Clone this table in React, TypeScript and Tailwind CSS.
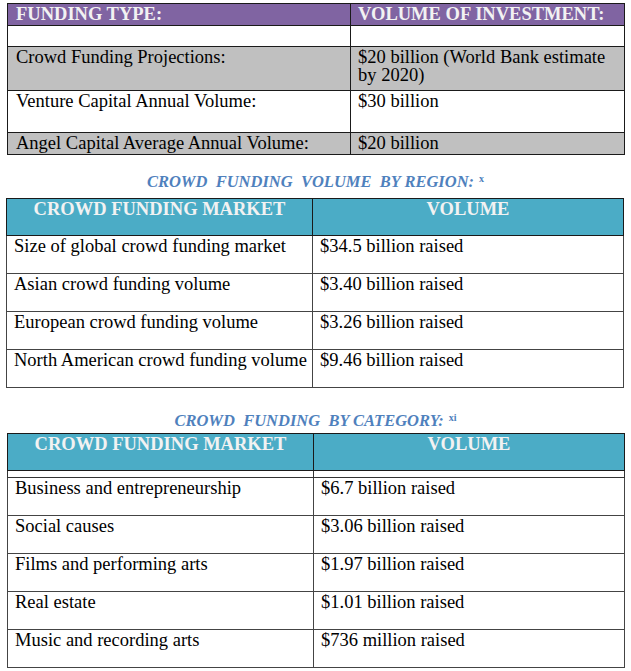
const regionRows = [
  ['Size of global crowd funding market', '$34.5 billion raised'],
  ['Asian crowd funding volume', '$3.40 billion raised'],
  ['European crowd funding volume', '$3.26 billion raised'],
  ['North American crowd funding volume', '$9.46 billion raised'],
];

const categoryRows = [
  ['Business and entrepreneurship', '$6.7 billion raised'],
  ['Social causes', '$3.06 billion raised'],
  ['Films and performing arts', '$1.97 billion raised'],
  ['Real estate', '$1.01 billion raised'],
  ['Music and recording arts', '$736 million raised'],
];

function SectionTitle({ text, note }: { text: string; note: string }) {
  return (
    <p className="font-['Liberation_Serif',serif] text-center text-[16.5px] font-bold italic leading-[20px] text-[#4f81bd] whitespace-pre">
      {text}
      <sup className="ml-[5px] text-[10px] not-italic">{note}</sup>
    </p>
  );
}

function MarketTable({ rows, spacer }: { rows: string[][]; spacer?: boolean }) {
  return (
    <table className="font-['Liberation_Serif',serif] w-[618px] table-fixed border-collapse border border-[#1a1a1a] text-[18.5px] text-black">
      <colgroup>
        <col className="w-[306px]" />
        <col />
      </colgroup>
      <thead>
        <tr className="h-[37px] bg-[#4bacc6] align-top">
          <th className="border border-[#1a1a1a] font-bold leading-[21px] text-[#f2f2f2]">CROWD FUNDING MARKET</th>
          <th className="border border-[#1a1a1a] font-bold leading-[21px] text-[#f2f2f2]">VOLUME</th>
        </tr>
      </thead>
      <tbody>
        {spacer && (
          <tr className="h-[7px]">
            <td className="border border-[#333]" />
            <td className="border border-[#333]" />
          </tr>
        )}
        {rows.map(([label, value]) => (
          <tr key={label} className="h-[38px] align-top">
            <td className="border border-[#444] px-[7px] leading-[21px] whitespace-nowrap">{label}</td>
            <td className="border border-[#444] px-[7px] leading-[21px]">{value}</td>
          </tr>
        ))}
      </tbody>
    </table>
  );
}

export default function App() {
  return (
    <div className="font-['Liberation_Serif',serif] w-[631px] h-[671px] bg-white">
      <div className="pt-[3px] pl-[7px]">
        <table className="font-['Liberation_Serif',serif] w-[618px] table-fixed border-collapse border border-[#1a1a1a] text-[18.5px] text-black">
          <colgroup>
            <col className="w-[343px]" />
            <col />
          </colgroup>
          <tbody>
            <tr className="h-[22px] bg-[#8064a2] align-top">
              <td className="border border-[#1a1a1a] px-[8px] font-bold leading-[20px] text-[#f2f2f2]">FUNDING TYPE:</td>
              <td className="border border-[#1a1a1a] px-[7px] font-bold leading-[20px] text-[#f2f2f2]">VOLUME OF INVESTMENT:</td>
            </tr>
            <tr className="h-[21px]">
              <td className="border border-[#1a1a1a]" />
              <td className="border border-[#1a1a1a]" />
            </tr>
            <tr className="h-[44px] bg-[#c0c0c0] align-top">
              <td className="border border-[#1a1a1a] px-[8px] pt-[1px] leading-[18px]">Crowd Funding Projections:</td>
              <td className="border border-[#1a1a1a] px-[7px] pt-[1px] leading-[18px]">$20 billion (World Bank estimate by 2020)</td>
            </tr>
            <tr className="h-[42px] align-top">
              <td className="border border-[#1a1a1a] px-[8px] leading-[20px]">Venture Capital Annual Volume:</td>
              <td className="border border-[#1a1a1a] px-[7px] leading-[20px]">$30 billion</td>
            </tr>
            <tr className="h-[22px] bg-[#c0c0c0] align-top">
              <td className="border border-[#1a1a1a] px-[8px] leading-[20px]">Angel Capital Average Annual Volume:</td>
              <td className="border border-[#1a1a1a] px-[7px] leading-[20px]">$20 billion</td>
            </tr>
          </tbody>
        </table>
      </div>

      <div className="mt-[17px]">
        <SectionTitle text="CROWD  FUNDING  VOLUME  BY REGION:" note="x" />
      </div>
      <div className="mt-[6px] pl-[6px]">
        <MarketTable rows={regionRows} />
      </div>

      <div className="mt-[23px]">
        <SectionTitle text="CROWD  FUNDING  BY CATEGORY:" note="xi" />
      </div>
      <div className="mt-[2px] pl-[7px]">
        <MarketTable rows={categoryRows} spacer />
      </div>
    </div>
  );
}
